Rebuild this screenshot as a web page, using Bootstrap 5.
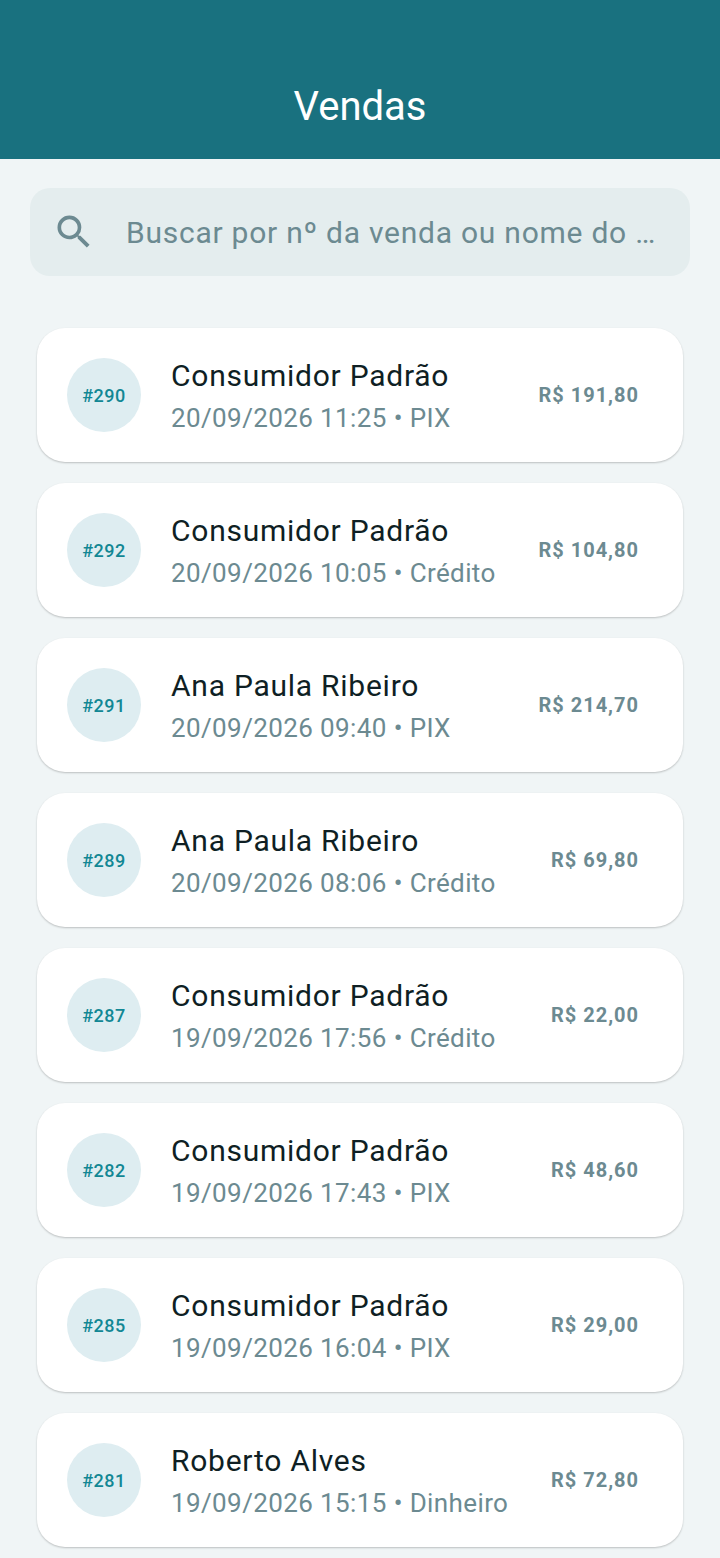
<!DOCTYPE html>
<html lang="pt-BR">
<head>
<meta charset="utf-8">
<meta name="viewport" content="width=device-width, initial-scale=1">
<title>Vendas</title>
<link href="https://cdn.jsdelivr.net/npm/bootstrap@5.3.0/dist/css/bootstrap.min.css" rel="stylesheet">
<style>
body { font-family: Roboto, "Liberation Sans", sans-serif; background: #f0f5f6; color: #0f1f24; }
.app-bar { background: #19717f; padding: 79px 24px 24px; }
.app-bar h1 { font-size: 40px; line-height: 56px; font-weight: 400; }
.search-box { background: #e4edee; border-radius: 20px; margin: 29px 30px 52px; padding: 22px 30px 22px 22px; gap: 30px; }
.search-box input { min-width: 0; height: 44px; font-size: 30px; letter-spacing: .025em; color: #6c8a91; text-overflow: ellipsis; outline: 0; }
.search-box input::placeholder { color: #6c8a91; opacity: 1; }
.sales { gap: 21px; padding: 0 37px 10px; }
.sale { background: #fff; border-radius: 28px; padding: 23px 44px 23px 30px; gap: 30px; box-shadow: 0 1px 2px rgba(0,0,0,.22); }
.sale-id { width: 74px; height: 74px; background: #deedf1; color: #128794; font-size: 18px; font-weight: 500; letter-spacing: .03em; }
.sale-text { padding-top: 4px; }
.sale-name { font-size: 30px; line-height: 42px; letter-spacing: .025em; }
.sale-info { font-size: 26px; line-height: 42px; letter-spacing: .015em; color: #6c8a91; }
.sale-total { font-size: 20px; font-weight: 700; letter-spacing: 1px; color: #6c8a91; }
</style>
</head>
<body>
<header class="app-bar text-white text-center"><h1 class="m-0">Vendas</h1></header>
<main>
<form class="search-box d-flex align-items-center" role="search">
<svg width="44" height="44" viewBox="0 0 24 24" fill="#6c8a91" class="flex-shrink-0" aria-hidden="true"><path d="M15.5 14h-.79l-.28-.27A6.47 6.47 0 0 0 16 9.5 6.5 6.5 0 1 0 9.5 16c1.61 0 3.09-.59 4.23-1.57l.27.28v.79l5 4.99L20.49 19l-4.99-5zm-6 0C7.01 14 5 11.99 5 9.5S7.01 5 9.5 5 14 7.01 14 9.5 11.99 14 9.5 14z"/></svg>
<input type="text" class="border-0 bg-transparent p-0 flex-grow-1" placeholder="Buscar por nº da venda ou nome do cliente" aria-label="Buscar venda">
</form>
<ul class="sales list-unstyled d-flex flex-column m-0" id="sales"></ul>
</main>
<script src="https://cdn.jsdelivr.net/npm/bootstrap@5.3.0/dist/js/bootstrap.bundle.min.js"></script>
<script>
const sales = [
["290","Consumidor Padrão","20/09/2026 11:25 • PIX","191,80"],
["292","Consumidor Padrão","20/09/2026 10:05 • Crédito","104,80"],
["291","Ana Paula Ribeiro","20/09/2026 09:40 • PIX","214,70"],
["289","Ana Paula Ribeiro","20/09/2026 08:06 • Crédito","69,80"],
["287","Consumidor Padrão","19/09/2026 17:56 • Crédito","22,00"],
["282","Consumidor Padrão","19/09/2026 17:43 • PIX","48,60"],
["285","Consumidor Padrão","19/09/2026 16:04 • PIX","29,00"],
["281","Roberto Alves","19/09/2026 15:15 • Dinheiro","72,80"]
];
document.getElementById("sales").innerHTML = sales.map(([id, name, info, total]) => `
<li class="sale d-flex align-items-center">
<span class="sale-id rounded-circle d-flex align-items-center justify-content-center flex-shrink-0">#${id}</span>
<div class="sale-text flex-grow-1"><div class="sale-name">${name}</div><div class="sale-info">${info}</div></div>
<span class="sale-total text-nowrap">R$ ${total}</span>
</li>`).join("");
</script>
</body>
</html>
